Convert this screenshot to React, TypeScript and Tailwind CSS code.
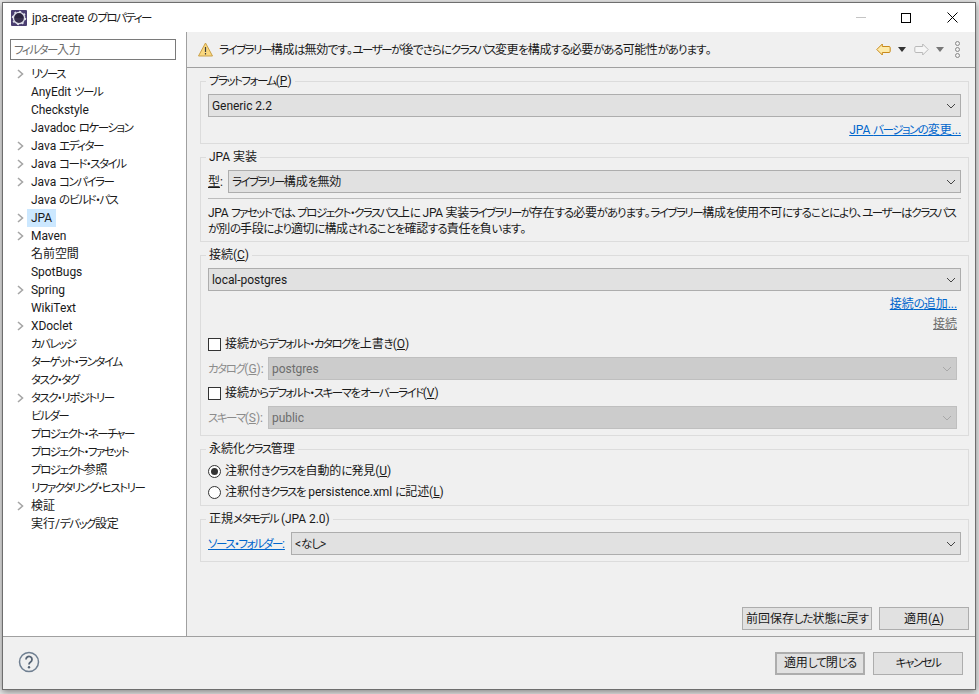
import type { ReactNode } from "react";

const TREE: [string, boolean][] = [
  ["リソース", true],
  ["AnyEdit ツール", false],
  ["Checkstyle", false],
  ["Javadoc ロケーション", false],
  ["Java エディター", true],
  ["Java コード・スタイル", true],
  ["Java コンパイラー", true],
  ["Java のビルド・パス", false],
  ["JPA", true],
  ["Maven", true],
  ["名前空間", false],
  ["SpotBugs", false],
  ["Spring", true],
  ["WikiText", false],
  ["XDoclet", true],
  ["カバレッジ", false],
  ["ターゲット・ランタイム", false],
  ["タスク・タグ", false],
  ["タスク・リポジトリー", true],
  ["ビルダー", false],
  ["プロジェクト・ネーチャー", false],
  ["プロジェクト・ファセット", false],
  ["プロジェクト参照", false],
  ["リファクタリング・ヒストリー", false],
  ["検証", true],
  ["実行/デバッグ設定", false],
];

/* かなだけ詰める — 元の UI フォントはかなの幅が狭い */
function Jp({ children }: { children: string }) {
  const parts = children.split(/([ァ-ヶー・]+|[ぁ-ん]+)/);
  return (
    <>
      {parts.map((part, i) => {
        if (/^[ァ-ヶー・]/.test(part)) {
          return <span key={i} className="text-[11.5px] tracking-[-1.5px]">{part}</span>;
        }
        if (/^[ぁ-ん]/.test(part)) {
          return <span key={i} className="text-[11.5px] tracking-[-1px]">{part}</span>;
        }
        return part;
      })}
    </>
  );
}

function Chevron({ disabled }: { disabled?: boolean }) {
  return (
    <svg width="10" height="6" viewBox="0 0 10 6" fill="none" className="flex-none">
      <path d="M1 1l4 4 4-4" stroke={disabled ? "#a8a8a8" : "#444"} strokeWidth="1" />
    </svg>
  );
}

function Select({ value, disabled, className = "" }: { value: string; disabled?: boolean; className?: string }) {
  return (
    <div
      className={`flex h-[23px] items-center justify-between whitespace-nowrap border pl-[3px] pr-[4px] ${
        disabled ? "border-[#bfbfbf] bg-[#cccccc] text-[#6d6d6d]" : "border-[#adadad] bg-[#e1e1e1]"
      } ${className}`}
    >
      <span><Jp>{value}</Jp></span>
      <Chevron disabled={disabled} />
    </div>
  );
}

function Group({ title, className = "", children }: { title: ReactNode; className?: string; children: ReactNode }) {
  return (
    <fieldset className={`ml-[13px] mr-[6px] min-w-0 border border-[#dcdcdc] px-[7px] pt-[6px] ${className}`}>
      <legend className="-ml-[2px] px-[3px] leading-[14px]">{title}</legend>
      {children}
    </fieldset>
  );
}

function Check({ label }: { label: ReactNode }) {
  return (
    <div className="flex h-[18px] items-center gap-[4px]">
      <span className="h-[13px] w-[13px] border border-[#333] bg-white" />
      <span>{label}</span>
    </div>
  );
}

function Radio({ checked, label }: { checked?: boolean; label: ReactNode }) {
  return (
    <div className="flex h-[18px] items-center gap-[4px]">
      <span className="flex h-[13px] w-[13px] items-center justify-center rounded-full border border-[#333] bg-white">
        {checked && <span className="h-[7px] w-[7px] rounded-full bg-[#333]" />}
      </span>
      <span>{label}</span>
    </div>
  );
}

function Btn({ children, className = "" }: { children: ReactNode; className?: string }) {
  return (
    <div className={`flex h-[23px] items-center justify-center whitespace-nowrap border border-[#adadad] bg-[#e1e1e1] ${className}`}>
      {children}
    </div>
  );
}

function Arrow({ right, disabled }: { right?: boolean; disabled?: boolean }) {
  return (
    <svg width="15" height="13" viewBox="0 0 15 13" className={right ? "-scale-x-100" : ""}>
      <path
        d="M0.8 6.5L6.3 1V3.5H13a1.2 1.2 0 0 1 1.2 1.2V8.3a1.2 1.2 0 0 1-1.2 1.2H6.3V12Z"
        fill={disabled ? "#f6f6f6" : "#fdeaa9"}
        stroke={disabled ? "#b9b9b9" : "#c98a1b"}
        strokeWidth="1"
      />
    </svg>
  );
}

function Caret({ color }: { color: string }) {
  return (
    <svg width="8" height="5" viewBox="0 0 8 5">
      <path d="M0 0h8L4 5z" fill={color} />
    </svg>
  );
}

export default function App() {
  return (
    <div
      className="h-[694px] w-[979px] overflow-hidden bg-[#e8e8e8] pl-[2px] pt-[2px] text-[12px] leading-[16px] tracking-[-0.05px] text-[#1a1a1a] [font-feature-settings:'palt']"
      style={{ fontFamily: 'Roboto, "Noto Sans CJK JP", sans-serif' }}
    >
      <div className="flex h-[688px] w-[974px] flex-col border border-[#6e6e6e] bg-[#f0f0f0] shadow-[0_2px_7px_rgba(0,0,0,0.45)]">
        {/* タイトルバー */}
        <div className="flex h-[29px] flex-none items-center bg-white pl-[8px]">
          <svg width="16" height="16" viewBox="0 0 16 16" className="flex-none">
            <rect width="16" height="16" rx="1" fill="#4b3f72" />
            <circle cx="8" cy="8" r="5.6" fill="#39314f" stroke="#dfe0ea" strokeWidth="1.4" />
            <circle cx="8" cy="8" r="6.6" fill="none" stroke="#dfe0ea" strokeWidth="1.2" strokeDasharray="2 3.18" />
            <path d="M3.6 8a4.4 4.4 0 0 1 8.8 0z" fill="#2b2540" />
          </svg>
          <span className="ml-[5px]"><Jp>jpa-create のプロパティー</Jp></span>
          <div className="ml-auto flex h-full items-center">
            <span className="mr-[35px] h-px w-[10px] bg-[#c4c4c4]" />
            <span className="mr-[36px] h-[10px] w-[10px] border border-black" />
            <svg width="11" height="11" viewBox="0 0 11 11" className="mr-[17px]">
              <path d="M0.5 0.5l10 10M10.5 0.5l-10 10" stroke="#000" strokeWidth="1" />
            </svg>
          </div>
        </div>

        <div className="flex min-h-0 flex-1">
          {/* 左ツリー */}
          <div className="w-[184px] flex-none border-r border-[#a0a0a0] bg-white">
            <div className="ml-[7px] mt-[7px] flex h-[21px] w-[166px] items-center border border-[#7a7a7a] px-[3px] text-[#6d6d6d]">
              <span><Jp>フィルター入力</Jp></span>
            </div>
            <ul className="mt-[5px]">
              {TREE.map(([name, expandable]) => (
                <li key={name} className="flex h-[18px] items-center whitespace-nowrap">
                  <span className="flex w-[28px] flex-none justify-end pr-[7px]">
                    {expandable && (
                      <svg width="7" height="10" viewBox="0 0 7 10" fill="none">
                        <path d="M1 1l4.5 4L1 9" stroke="#a6a6a6" strokeWidth="1.6" />
                      </svg>
                    )}
                  </span>
                  <span className={name === "JPA" ? "-ml-[4px] bg-[#cce8ff] px-[4px] leading-[18px]" : ""}>
                    <Jp>{name}</Jp>
                  </span>
                </li>
              ))}
            </ul>
          </div>

          {/* 右ペイン */}
          <div className="flex min-w-0 flex-1 flex-col">
            <div className="flex h-[36px] flex-none items-center border-b border-[#a0a0a0] pl-[11px] pr-[15px]">
              <svg width="15" height="15" viewBox="0 0 15 15" className="flex-none">
                <path d="M7.5 1L14.5 14H0.5Z" fill="#f9d77e" stroke="#c9a04a" strokeWidth="1" strokeLinejoin="round" />
                <path d="M7.5 5v5M7.5 11v1.5" stroke="#3c3c3c" strokeWidth="1.2" />
              </svg>
              <span className="ml-[6px] whitespace-nowrap tracking-[-0.4px]">
                <Jp>ライブラリー構成は無効です。ユーザーが後でさらにクラスパス変更を構成する必要がある可能性があります。</Jp>
              </span>
              <div className="ml-auto flex items-center">
                <Arrow />
                <span className="ml-[7px] flex">
                  <Caret color="#333" />
                </span>
                <span className="ml-[8px] flex">
                  <Arrow right disabled />
                </span>
                <span className="ml-[7px] flex">
                  <Caret color="#777" />
                </span>
                <span className="ml-[11px] flex flex-col gap-[1px]">
                  <span className="h-[5px] w-[5px] rounded-full border border-[#888]" />
                  <span className="h-[5px] w-[5px] rounded-full border border-[#888]" />
                  <span className="h-[5px] w-[5px] rounded-full border border-[#888]" />
                </span>
              </div>
            </div>

            <div className="flex min-h-0 flex-1 flex-col pt-[6px]">
              <Group title={<><Jp>プラットフォーム(</Jp><u>P</u>)</>} className="h-[70px]">
                <Select value="Generic 2.2" />
                <div className="mt-[5px] text-right text-[#0066cc] underline"><Jp>JPA バージョンの変更...</Jp></div>
              </Group>

              <Group title="JPA 実装" className="mt-[6px] h-[92px]">
                <div className="flex items-center gap-[5px]">
                  <span className="w-[15px] flex-none"><u>型</u>:</span>
                  <Select value="ライブラリー構成を無効" className="flex-1" />
                </div>
                <div className="mt-[5px] whitespace-nowrap border-t border-[#bdbdbd] pt-[6px] tracking-[-0.3px]">
                  <Jp>JPA ファセットでは、プロジェクト・クラスパス上に JPA 実装ライブラリーが存在する必要があります。ライブラリー構成を使用不可にすることにより、ユーザーはクラスパス</Jp>
                  <br />
                  <Jp>が別の手段により適切に構成されることを確認する責任を負います。</Jp>
                </div>
              </Group>

              <Group title={<><Jp>接続(</Jp><u>C</u>)</>} className="mt-[6px] h-[188px]">
                <Select value="local-postgres" className="border-[#8fa3b3]" />
                <div className="mt-[5px] pr-[4px] text-right text-[#0066cc] underline"><Jp>接続の追加...</Jp></div>
                <div className="mt-[4px] pr-[4px] text-right text-[#6d6d6d] underline">接続</div>
                <div className="mt-[3px]"><Check label={<><Jp>接続からデフォルト・カタログを上書き(</Jp><u>O</u>)</>} /></div>
                <div className="mt-[4px] flex items-center pr-[4px]">
                  <span className="w-[60px] flex-none whitespace-nowrap text-[#8c8c8c]"><Jp>カタログ(</Jp><u>G</u>):</span>
                  <Select value="postgres" disabled className="flex-1" />
                </div>
                <div className="mt-[4px]"><Check label={<><Jp>接続からデフォルト・スキーマをオーバーライド(</Jp><u>V</u>)</>} /></div>
                <div className="mt-[4px] flex items-center pr-[4px]">
                  <span className="w-[60px] flex-none whitespace-nowrap text-[#8c8c8c]"><Jp>スキーマ(</Jp><u>S</u>):</span>
                  <Select value="public" disabled className="flex-1" />
                </div>
              </Group>

              <Group title={<Jp>永続化クラス管理</Jp>} className="mt-[6px] h-[64px] pt-[5px]">
                <Radio checked label={<><Jp>注釈付きクラスを自動的に発見(</Jp><u>U</u>)</>} />
                <div className="mt-[3px]"><Radio label={<><Jp>注釈付きクラスを persistence.xml に記述(</Jp><u>L</u>)</>} /></div>
              </Group>

              <Group title={<Jp>正規メタモデル (JPA 2.0)</Jp>} className="mt-[6px] h-[50px]">
                <div className="flex items-center gap-[5px]">
                  <span className="w-[78px] flex-none whitespace-nowrap text-[#0066cc] underline"><Jp>ソース・フォルダー:</Jp></span>
                  <Select value="<なし>" className="flex-1" />
                </div>
              </Group>

              <div className="mt-auto flex justify-end gap-[7px] pb-[6px] pr-[6px]">
                <Btn className="w-[130px]"><Jp>前回保存した状態に戻す</Jp></Btn>
                <Btn className="w-[90px]">適用(<u>A</u>)</Btn>
              </div>
            </div>
          </div>
        </div>

        {/* フッター */}
        <div className="flex h-[53px] flex-none items-center border-t border-[#a0a0a0] pl-[15px] pr-[12px]">
          <svg width="22" height="22" viewBox="0 0 22 22" fill="none" className="-mt-[2px]">
            <circle cx="11" cy="11" r="9.5" stroke="#6f7f91" strokeWidth="1.5" />
            <path d="M8 8.5a3 3 0 1 1 4.6 2.5c-1 .7-1.6 1.2-1.6 2.5" stroke="#566475" strokeWidth="1.8" />
            <circle cx="11" cy="16.2" r="1.2" fill="#566475" />
          </svg>
          <div className="ml-auto flex gap-[8px]">
            <Btn className="w-[90px] border-2 border-[#0078d7]"><Jp>適用して閉じる</Jp></Btn>
            <Btn className="w-[90px]"><Jp>キャンセル</Jp></Btn>
          </div>
        </div>
      </div>
    </div>
  );
}
